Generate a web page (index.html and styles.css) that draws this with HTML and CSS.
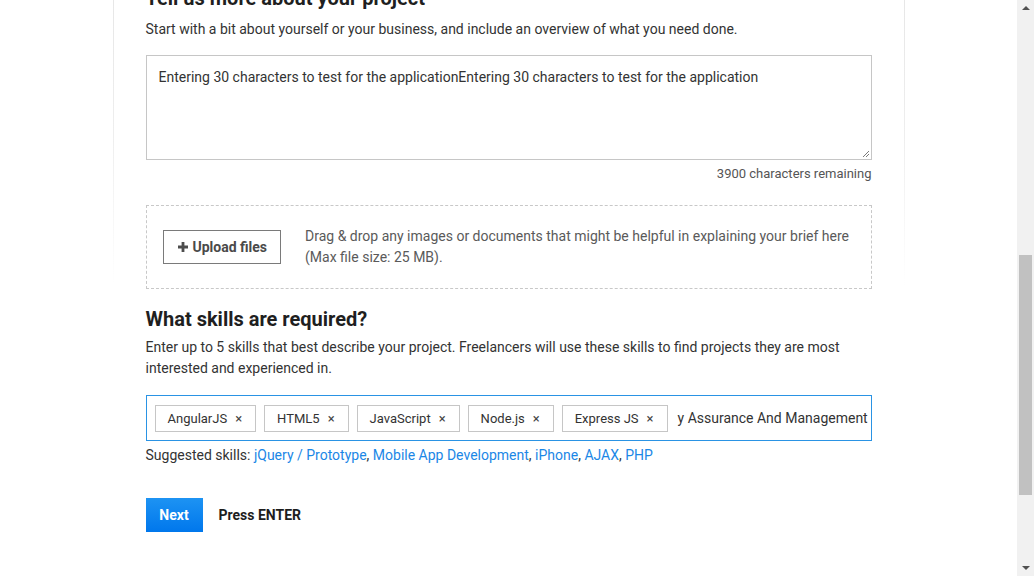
FILE: index.html
```html
<!DOCTYPE html>
<html lang="en">
<head>
<meta charset="utf-8">
<title>Post a project</title>
<link rel="stylesheet" href="styles.css">
</head>
<body>
<div class="page">
  <main class="main">
    <section class="card">
      <h2 class="title">Tell us more about your project</h2>
      <p class="lead">Start with a bit about yourself or your business, and include an overview of what you need done.</p>
      <div class="textarea">Entering 30 characters to test for the applicationEntering 30 characters to test for the application<span class="grip"><svg width="9" height="9" viewBox="0 0 9 9"><path d="M8 2 L2 8 M8 5 L5 8" stroke="#7a7a7a" stroke-width="1" fill="none"/></svg></span></div>
      <div class="remaining">3900 characters remaining</div>
      <div class="upload">
        <button class="upload-btn"><svg class="plus" width="10" height="10" viewBox="0 0 10 10"><path d="M3.6 0h2.8v3.6H10v2.8H6.4V10H3.6V6.4H0V3.6h3.6z" fill="#4d4d4d"/></svg>Upload files</button>
        <p class="upload-text">Drag &amp; drop any images or documents that might be helpful in explaining your brief here (Max file size: 25 MB).</p>
      </div>
      <h2 class="title skills-title">What skills are required?</h2>
      <p class="lead">Enter up to 5 skills that best describe your project. Freelancers will use these skills to find projects they are most interested and experienced in.</p>
      <div class="skills">
        <span class="tag">AngularJS<span class="x">×</span></span>
        <span class="tag">HTML5<span class="x">×</span></span>
        <span class="tag">JavaScript<span class="x">×</span></span>
        <span class="tag">Node.js<span class="x">×</span></span>
        <span class="tag">Express JS<span class="x">×</span></span>
        <span class="typed">y Assurance And Management</span>
      </div>
      <p class="suggested">Suggested skills: <a href="#">jQuery / Prototype</a>, <a href="#">Mobile App Development</a>, <a href="#">iPhone</a>, <a href="#">AJAX</a>, <a href="#">PHP</a></p>
      <div class="actions">
        <button class="next">Next</button>
        <span class="enter">Press ENTER</span>
      </div>
    </section>
  </main>
  <div class="scrollbar">
    <span class="arrow up"></span>
    <span class="track"><span class="thumb"></span></span>
    <span class="arrow down"></span>
  </div>
</div>
</body>
</html>
```

FILE: styles.css
```css
* { box-sizing: border-box; }
html, body { margin: 0; padding: 0; height: 100%; overflow: hidden; }
body {
  font-family: Roboto, "Liberation Sans", Arial, sans-serif;
  color: #333;
  background: #fff;
}
.page { display: flex; height: 576px; }
.main { flex: 1; display: flex; justify-content: center; }
.card {
  width: 792px;
  height: 600px;
  margin-top: -14px;
  padding: 0 32px;
  border-left: 1px solid #e8e8e8;
  border-right: 1px solid #e8e8e8;
  border-image: linear-gradient(to bottom, #e6e6e6 0px, #eeeeee 150px, rgba(240,240,240,0) 300px) 1;
}
.title {
  margin: 0;
  font-size: 20px;
  line-height: 24px;
  font-weight: 700;
  color: #1f1f1f;
}
.lead {
  margin: 9px 0 0;
  font-size: 14px;
  line-height: 21px;
  color: #333;
}
.textarea {
  position: relative;
  margin-top: 15px;
  height: 105px;
  border: 1px solid #c6c6c6;
  padding: 11px 12px;
  font-size: 14px;
  line-height: 21px;
  color: #333;
}
.grip { position: absolute; right: 1px; bottom: 1px; width: 9px; height: 9px; display: flex; }
.remaining {
  margin-top: 4px;
  text-align: right;
  font-size: 13px;
  line-height: 20px;
  color: #555;
}
.upload {
  margin-top: 21px;
  height: 84px;
  border: 1px dashed #c8c8c8;
  padding: 0 16px;
  display: flex;
  align-items: center;
  gap: 24px;
}
.upload-btn {
  flex: none;
  display: flex;
  align-items: center;
  gap: 5px;
  height: 34px;
  padding: 0 13px 0 14px;
  border: 1px solid #7a7a7a;
  background: #fff;
  white-space: nowrap;
  font-family: inherit;
  font-size: 14px;
  font-weight: 700;
  color: #4a4a4a;
}
.plus { flex: none; }
.upload-text {
  margin: 0;
  font-size: 14px;
  line-height: 21px;
  color: #5a5a5a;
}
.skills-title { margin-top: 18px; }
.skills-title + .lead { margin-top: 6px; }
.skills {
  margin-top: 16px;
  height: 46px;
  border: 1px solid #2a93e4;
  padding: 0 8px;
  display: flex;
  align-items: center;
  gap: 8px;
  overflow: hidden;
  white-space: nowrap;
}
.tag {
  flex: none;
  display: inline-flex;
  align-items: center;
  height: 27px;
  padding: 0 13px 0 12px;
  border: 1px solid #c6c6c6;
  font-size: 13px;
  color: #333;
}
.x { margin-left: 8px; font-size: 13px; color: #444; }
.typed { flex: none; margin-left: 2px; font-size: 14px; color: #333; }
.suggested {
  margin: 4px 0 0;
  font-size: 14px;
  line-height: 21px;
  color: #333;
}
.suggested a { color: #1b87e6; text-decoration: none; }
.actions {
  margin-top: 32px;
  display: flex;
  align-items: center;
  gap: 16px;
}
.next {
  height: 34px;
  width: 57px;
  border: 0;
  background: linear-gradient(to bottom, #1d93f3, #0077ec);
  color: #fff;
  font-family: inherit;
  font-size: 14px;
  font-weight: 700;
  padding: 0;
}
.enter { font-size: 14px; font-weight: 700; color: #1d1d1d; }
.scrollbar {
  flex: none;
  width: 17px;
  background: #f1f1f1;
  display: flex;
  flex-direction: column;
  align-items: center;
}
.arrow { flex: none; width: 0; height: 0; border-left: 4px solid transparent; border-right: 4px solid transparent; }
.arrow.up { margin: 6px 0 5px; border-bottom: 4px solid #505050; }
.arrow.down { margin: 5px 0 6px; border-top: 4px solid #505050; }
.track { flex: 1; width: 100%; display: flex; justify-content: center; padding-top: 240px; }
.thumb { display: block; width: 13px; height: 240px; background: #c1c1c1; }
```
